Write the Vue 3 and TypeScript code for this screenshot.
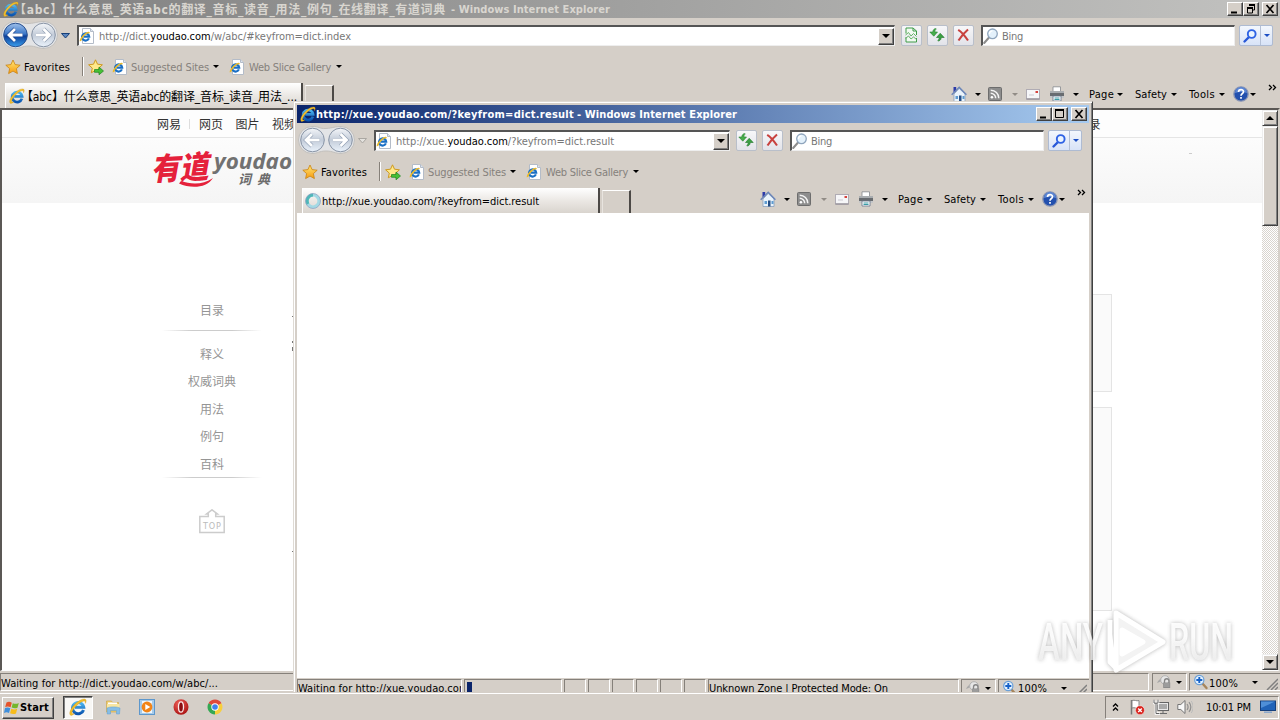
<script setup lang="ts">
interface BrowserWindow {
  id: string
  title: string
  titleWidth: number
  suffix: string
  suffixWidth: number
  host: [string, string, string]
  urlWidth: number
  tab: string
  tabWidth: number
  active: boolean
}

interface Command {
  icon?: string
  label?: string
  labelWidth?: number
  size?: number
  width: number
  gap: number
  arrow?: 'on' | 'off'
}

const windows: BrowserWindow[] = [
  {
    id: 'main',
    title: '【abc】什么意思_英语abc的翻译_音标_读音_用法_例句_在线翻译_有道词典',
    titleWidth: 432,
    suffix: '- Windows Internet Explorer',
    suffixWidth: 159,
    host: ['http://dict.', 'youdao.com', '/w/abc/#keyfrom=dict.index'],
    urlWidth: 252,
    tab: '【abc】什么意思_英语abc的翻译_音标_读音_用法_...',
    tabWidth: 276,
    active: false,
  },
  {
    id: 'popup',
    title: 'http://xue.youdao.com/?keyfrom=dict.result',
    titleWidth: 258,
    suffix: '- Windows Internet Explorer',
    suffixWidth: 160,
    host: ['http://xue.', 'youdao.com', '/?keyfrom=dict.result'],
    urlWidth: 218,
    tab: 'http://xue.youdao.com/?keyfrom=dict.result',
    tabWidth: 217,
    active: true,
  },
]

const commands: Command[] = [
  { icon: 'home', size: 16, width: 37, gap: 8, arrow: 'on' },
  { icon: 'rss', size: 14, width: 38, gap: 10, arrow: 'off' },
  { icon: 'mail', size: 14, width: 23, gap: 0 },
  { icon: 'printer', size: 16, width: 40, gap: 8, arrow: 'on' },
  { label: 'Page', labelWidth: 25, width: 46, gap: 3, arrow: 'on' },
  { label: 'Safety', labelWidth: 32, width: 54, gap: 4, arrow: 'on' },
  { label: 'Tools', labelWidth: 26, width: 44, gap: 4, arrow: 'on' },
  { icon: 'help', size: 16, width: 35, gap: 1, arrow: 'on' },
]

const topics = ['释义', '权威词典', '用法', '例句', '百科']
const topLinks = ['网页', '图片', '视频']
const launchers = ['explorer', 'player', 'opera', 'chrome']

// Spreads the letters of a label so that it fills exactly the given width.
const vFit = {
  mounted(el: HTMLElement, binding: { value: number }) {
    const count = Array.from(el.textContent ?? '').length
    const natural = el.getBoundingClientRect().width
    if (count > 0 && natural > 0) {
      el.style.letterSpacing = `${(binding.value - natural) / count}px`
    }
  },
}
</script>

<template>
  <div class="screen">
    <svg class="defs" width="0" height="0">
      <defs>
        <linearGradient id="gBlue" x1="0" y1="0" x2="0" y2="1">
          <stop offset="0" stop-color="#9fc0ea" /><stop offset=".45" stop-color="#3c78c8" />
          <stop offset=".55" stop-color="#0d3f99" /><stop offset="1" stop-color="#3aa0ee" />
        </linearGradient>
        <linearGradient id="gPale" x1="0" y1="0" x2="0" y2="1">
          <stop offset="0" stop-color="#f4f6f9" /><stop offset=".5" stop-color="#c3ccd9" />
          <stop offset="1" stop-color="#eaf2fb" />
        </linearGradient>
        <linearGradient id="gStar" x1="0" y1="0" x2="0" y2="1">
          <stop offset="0" stop-color="#ffe97a" /><stop offset="1" stop-color="#f79a0c" />
        </linearGradient>
        <linearGradient id="gE" x1="0" y1="0" x2="0" y2="1">
          <stop offset="0" stop-color="#4db8f2" /><stop offset="1" stop-color="#0b55b0" />
        </linearGradient>
        <linearGradient id="gMark" x1="0" y1="0" x2="0" y2="1">
          <stop offset=".4" stop-color="#fff" /><stop offset="1" stop-color="#e4e4e4" />
        </linearGradient>
        <radialGradient id="gRed" cx=".4" cy=".3" r=".8">
          <stop offset="0" stop-color="#f0625a" /><stop offset="1" stop-color="#a30a0a" />
        </radialGradient>
      </defs>
      <symbol id="ie" viewBox="0 0 16 16">
        <path d="M12.9 10.6A5 5 0 1 1 13.1 8.3H5.2" fill="none" stroke="url(#gE)" stroke-width="2.7" />
        <path d="M1.2 15.2C-.8 13 3.2 6.6 8 3.2 11.5.6 15.4 0 15.2 2.6c0 .8-.3 1.5-.7 2.2.2-1.7-.3-2.3-1.7-2C8.9 3.6 2.3 10.600 2.600 13.400c.1.8 1 .9 2.300.4-1.400 1.200-2.900 2.100-3.700 1.400z" fill="#f3c02c" stroke="#c58a12" stroke-width=".3" />
      </symbol>
      <symbol id="iepage" viewBox="0 0 16 16">
        <path d="M3.500.5h8l3 3v12h-11z" fill="#fff" stroke="#b4bcc8" />
        <path d="M11.500.5v3h3" fill="#dde6f0" stroke="#b4bcc8" />
        <path d="M9.900 10.400A3.600 3.600 0 1 1 10.200 8.700H4.500" fill="none" stroke="#1a6fc4" stroke-width="2.200" />
        <path d="M.8 13.500C0 11 5 4.500 9.500 3.800c1.300-.1 1.500.8 1 1.700C9 3.800 3 9.500 2.600 12.400z" fill="#e9b92c" />
      </symbol>
      <symbol id="star" viewBox="0 0 16 16">
        <path d="M8 1l2.100 4.600 5.100.6-3.800 3.400 1 5L8 12.100l-4.400 2.500 1-5L.8 6.200l5.100-.6z" fill="url(#gStar)" stroke="#c98312" stroke-width=".8" />
      </symbol>
      <symbol id="staradd" viewBox="0 0 16 16">
        <path d="M7.500 .8l2 4.400 4.900.6-3.700 3.300 1 4.700-4.200-2.400-4.200 2.400 1-4.700L.6 5.800l4.900-.6z" fill="#ffe98a" stroke="#cf9a20" />
        <path d="M6.500 10.500h4.500V8l4.500 4-4.500 3.800v-2.500H6.500z" fill="#46c035" stroke="#1c8420" stroke-width=".7" />
      </symbol>
      <symbol id="compat" viewBox="0 0 16 16">
        <path d="M3 6.500V1h7l3.500 3v4M3 10v5h10.500v-4" fill="#f2faf2" stroke="#3f9b48" />
        <path d="M10 1v3h3.500" fill="none" stroke="#3f9b48" />
        <path d="M2.500 8l3-2.500L8 9l2.500-2.500 3 3M2.500 11.500l3-2.500L8 12l2.500-2 3 2.500" fill="none" stroke="#67b56a" />
      </symbol>
      <symbol id="refresh" viewBox="0 0 16 16">
        <path d="M6.500 1.500C4.500 2 3.800 3.500 3.800 5H.8l4 4.200L8.500 5H5.900c0-1.300.2-2.300 1.400-3z" fill="#47ad4c" stroke="#26832f" stroke-width=".6" />
        <path d="M9.500 14c2-.5 2.700-2 2.700-3.500h3l-4-4.200L7.500 10.500h2.600c0 1.300-.2 2.300-1.400 3z" fill="#3ba043" stroke="#20762a" stroke-width=".6" />
      </symbol>
      <symbol id="stop" viewBox="0 0 16 16">
        <path d="M3.200 2.800C6 4.500 10 9 13 13.500M13 2.500C9.500 5.500 6 9.500 3.500 13.500" fill="none" stroke="#c8423f" stroke-width="2.100" />
      </symbol>
      <symbol id="lens" viewBox="0 0 16 16">
        <path d="M6 9.500L1.200 15" stroke="#8d8d8d" stroke-width="2" stroke-linecap="round" />
        <circle cx="9.500" cy="5.800" r="4.800" fill="#e4f1fb" stroke="#8fa5bd" stroke-width="1.300" />
        <path d="M6.500 6a3 3 0 0 1 3-3.200" fill="none" stroke="#fff" stroke-width="1.300" />
      </symbol>
      <symbol id="search" viewBox="0 0 16 16">
        <path d="M7 9L2.500 13.500" stroke="#2858d8" stroke-width="2.400" stroke-linecap="round" />
        <circle cx="9.700" cy="6" r="3.900" fill="#eaf4ff" stroke="#2e62e4" stroke-width="1.900" />
      </symbol>
      <symbol id="home" viewBox="0 0 16 16">
        <path d="M2.500 1h2.700v5H2.500z" fill="#2c3aa8" />
        <path d="M3 8l5.200-5.500L14 8v7.500H3z" fill="#e9f3fb" stroke="#7e97b8" stroke-width=".7" />
        <path d="M.7 8.800L8.200 1.300l7.200 7.500" fill="none" stroke="#6b86b9" stroke-width="1.500" />
        <path d="M8 9.500h2.500v6H8z" fill="#264f85" /><path d="M11.500 10h2v3h-2zM4.500 10H7v3H4.500z" fill="#5f9bd0" />
      </symbol>
      <symbol id="rss" viewBox="0 0 14 14">
        <rect x=".5" y=".5" width="13" height="13" rx="1" fill="#8d8d8d" stroke="#6d6d6d" />
        <circle cx="3.900" cy="10.200" r="1.300" fill="#fff" />
        <path d="M2.700 6.300a5 5 0 0 1 5 5M2.700 3.200a8 8 0 0 1 8.100 8.100" fill="none" stroke="#f4f4f4" stroke-width="1.500" />
      </symbol>
      <symbol id="mail" viewBox="0 0 14 14">
        <rect x=".5" y="2.500" width="13" height="9.500" fill="#f6f6f8" stroke="#b0acb4" />
        <path d="M.5 12h13" stroke="#858089" /><path d="M9.500 4h2.500v2H9.500z" fill="#d6423c" />
        <path d="M3 8h5" stroke="#cbc9d2" />
      </symbol>
      <symbol id="printer" viewBox="0 0 16 16">
        <path d="M4 5V.8h7.500V5" fill="#fff" stroke="#85898e" stroke-width=".8" />
        <path d="M1 5h14v6.500H1z" fill="#686c70" /><path d="M1 5h14v2H1z" fill="#a9adb0" />
        <path d="M1 10h14v2H1z" fill="#c5c7c9" />
        <path d="M4 10h8v5H4z" fill="#fff" stroke="#64758a" stroke-width=".8" />
        <path d="M5.500 12h5M5.500 13.500h5" stroke="#3c9ba6" />
      </symbol>
      <symbol id="help" viewBox="0 0 16 16">
        <circle cx="8" cy="8" r="7.200" fill="#2350ae" stroke="#8b96b4" stroke-width="1.300" />
        <path d="M2 7a6 6 0 0 1 12 0c-4-1.500-8-1.500-12 0z" fill="#5c86d3" />
        <path d="M5.500 6.100C5.500 2.900 10.500 2.900 10.500 5.800 10.500 7.600 8 7.500 8 9.800M8 11v1.800" fill="none" stroke="#fff" stroke-width="1.700" />
      </symbol>
      <symbol id="zoomglass" viewBox="0 0 16 16">
        <path d="M9 9l4.500 5" stroke="#a7855a" stroke-width="2.400" stroke-linecap="round" />
        <circle cx="6.300" cy="6" r="4.600" fill="#e4f2ff" stroke="#6ba0d8" stroke-width="1.200" />
        <path d="M6.300 3v6M3.300 6h6" stroke="#1762c8" stroke-width="1.900" />
      </symbol>
      <symbol id="lock" viewBox="0 0 16 16">
        <path d="M1 9c2-4 6-6.500 9-6.500L8.500 7C5.500 6.500 3 8 1 9z" fill="#a8a8a8" />
        <circle cx="9" cy="6" r="4.300" fill="#e6e6e6" stroke="#b2b2b2" />
        <path d="M8.500 9V7a2 2 0 0 1 4.500 0v2" fill="none" stroke="#858585" stroke-width="1.300" />
        <rect x="7.200" y="8.500" width="7" height="5.500" fill="#8b8b8b" />
        <path d="M8 10h5.500M8 12h5.500" stroke="#bbb" stroke-width=".7" />
      </symbol>
      <symbol id="explorer" viewBox="0 0 16 16">
        <path d="M1.500 2h5l1 1.500h6V13h-12z" fill="#efce70" stroke="#caa345" stroke-width=".6" />
        <path d="M3 3.500h9V8H3z" fill="#fff" /><path d="M2 5h12.500v5H2z" fill="#f8e6a2" />
        <path d="M2 9c3-1.500 10-1.500 13 0l-.5 6h-3v-3.500H5.500V15H2.200z" fill="#86bde6" stroke="#5c9cd0" stroke-width=".5" />
      </symbol>
      <symbol id="player" viewBox="0 0 16 16">
        <rect x=".5" y=".5" width="15" height="15" fill="#a6cbea" stroke="#5d97cc" />
        <path d="M3 2h10v12H3z" fill="#eef6fc" /><circle cx="8" cy="8" r="5.400" fill="#f28417" />
        <path d="M6.300 4.900l5 3.100-5 3.100z" fill="#fff" />
      </symbol>
      <symbol id="opera" viewBox="0 0 16 16">
        <ellipse cx="8" cy="8" rx="7.500" ry="7.800" fill="url(#gRed)" />
        <ellipse cx="8" cy="8" rx="2.500" ry="5.200" fill="#8b0d10" stroke="#fbeaea" stroke-width="1.300" />
      </symbol>
      <symbol id="chrome" viewBox="0 0 16 16">
        <path d="M8 8L1.500 4.300A7.500 7.500 0 0 1 14.500 4.300z" fill="#e04a3a" />
        <path d="M8 8L14.500 4.300A7.500 7.500 0 0 1 8 15.500z" fill="#f7cf3c" />
        <path d="M8 8V15.500A7.500 7.500 0 0 1 1.500 4.300z" fill="#35a853" />
        <circle cx="8" cy="8" r="3.700" fill="#fff" /><circle cx="8" cy="8" r="2.800" fill="#3f82ee" />
      </symbol>
      <symbol id="flagx" viewBox="0 0 16 16">
        <path d="M2.500 1v14.500" stroke="#777" stroke-width="1.500" />
        <path d="M3 1.500c3-1 4 1 7 0v7.500c-3 1-4-1-7 0z" fill="#fff" stroke="#888" />
        <circle cx="11" cy="11.200" r="4.500" fill="#d9241d" stroke="#fff" stroke-width=".5" />
        <path d="M9.200 9.400l3.600 3.600M12.800 9.400L9.200 13" stroke="#fff" stroke-width="1.400" />
      </symbol>
      <symbol id="net" viewBox="0 0 16 16">
        <rect x="4.500" y="3.500" width="11" height="8" fill="#e8e8e8" stroke="#656565" />
        <rect x="6" y="5" width="8" height="5" fill="#a9a9a9" />
        <path d="M6 14.500h8M10 12v2" stroke="#6a6a6a" />
        <path d="M1 1v3h4V1M3 4v10.500h4" fill="none" stroke="#fff" stroke-width="2.600" />
        <path d="M1 .8v3.300h4V.8M3 4v10.500h3.500" fill="none" stroke="#606060" />
      </symbol>
      <symbol id="speaker" viewBox="0 0 16 16">
        <path d="M.8 5.500h3L8 1.500v13L3.800 10.500h-3z" fill="#f8f8f8" stroke="#757575" />
        <path d="M10 5c1.300 1.800 1.300 4.200 0 6M12 3.200c2.300 3 2.300 6.600 0 9.600" fill="none" stroke="#8f8f8f" stroke-width="1.200" />
        <path d="M14.300 2c2.300 4 2.300 8 0 12" fill="none" stroke="#bbb" />
      </symbol>
      <symbol id="monitor" viewBox="0 0 16 16">
        <rect x=".5" y="2" width="15" height="9.500" fill="#2163b8" stroke="#16407c" />
        <path d="M1 2.500h14L1 9z" fill="#4f8fd8" /><path d="M4 13.200h8" stroke="#8aa7cc" stroke-width="1.500" />
      </symbol>
      <symbol id="winlogo" viewBox="0 0 16 16">
        <path d="M2.500 2.500c2-1 3.500-.8 5.300.2L6.600 7.300C4.800 6.300 3 6.300 1.200 7z" fill="#e5532a" />
        <path d="M8.800 3.200c2 .8 3.700.8 6-.3l-1.300 4.800c-2 .9-3.700.8-5.900-.1z" fill="#74b62c" />
        <path d="M1 8c2-.8 3.600-.7 5.300.3L5 13c-1.600-1-3.200-1-5 0z" fill="#3f8fdc" />
        <path d="M7.300 8.800c2 .9 3.800.9 5.900 0L12 13.500c-2 .9-3.800.8-5.900-.2z" fill="#f7bc1a" />
      </symbol>
    </svg>

    <div class="desktop">
      <section v-for="win in windows" :key="win.id" class="window" :class="win.id">
        <header class="titlebar">
          <svg class="i16"><use href="#ie" /></svg>
          <span v-fit="win.titleWidth" class="title">{{ win.title }}</span>
          <span v-fit="win.suffixWidth" class="title suffix">{{ win.suffix }}</span>
          <span class="spacer"></span>
          <span class="caps">
            <i class="cap"><svg viewBox="0 0 14 12"><path d="M3 8.500h6v2H3z" /></svg></i>
            <i class="cap">
              <svg v-if="win.active" viewBox="0 0 14 12"><path d="M2.500 2h8v7.500h-8z" fill="none" stroke="#000" /><path d="M2 1h9v2H2z" /></svg>
              <svg v-else viewBox="0 0 14 12"><path d="M5.500 2h5v5h-2M3.500 5h5v5h-5z" fill="none" stroke="#000" /><path d="M5 1h6v2H5zM3 4h6v2H3z" /></svg>
            </i>
            <i class="cap close"><svg viewBox="0 0 14 12"><path d="M3.500 2l7 8M10.500 2l-7 8" stroke="#000" stroke-width="1.700" /></svg></i>
          </span>
        </header>

        <div class="navrow">
          <svg class="travel" viewBox="0 0 72 30">
            <path d="M15 1.500C22 1 22 4 29 3.500S38 1.500 44 1.500a13 13 0 0 1 0 27C38 28.500 36 26 29 26s-8 2.500-14 2.500a13 13 0 0 1 0-27z" fill="#e3e4e6" stroke="#c2c0bd" />
            <circle cx="15.500" cy="15" r="11.800" :fill="win.active ? 'url(#gPale)' : 'url(#gBlue)'" :stroke="win.active ? '#8793a5' : '#274e8e'" />
            <circle cx="43.500" cy="15" r="11.800" fill="url(#gPale)" stroke="#8793a5" />
            <g fill="none" stroke-width="3">
              <path d="M22.500 15H10M15 9l-6 6 6 6" :stroke="win.active ? '#8f9db2' : '#1c458c'" stroke-width="4" />
              <path d="M22.500 15H10M15 9l-6 6 6 6" stroke="#fff" stroke-width="2.800" />
              <path d="M36 15H48.500M43.500 9l6 6-6 6" stroke="#8f9db2" stroke-width="4" />
              <path d="M36 15H48.500M43.500 9l6 6-6 6" stroke="#fff" stroke-width="2.800" />
            </g>
            <path d="M61.500 13.500h8l-4 4.500z" :fill="win.active ? '#e4e2de' : '#5b86c0'" :stroke="win.active ? '#aaa7a2' : '#173f78'" />
          </svg>
          <div class="address">
            <svg class="i16"><use href="#iepage" /></svg>
            <span v-fit="win.urlWidth" class="url">{{ win.host[0] }}<b>{{ win.host[1] }}</b>{{ win.host[2] }}</span>
            <span class="spacer"></span>
            <i class="drop"><i class="arrow big"></i></i>
          </div>
          <i v-if="!win.active" class="tool"><svg class="i16"><use href="#compat" /></svg></i>
          <i class="tool"><svg class="i16"><use href="#refresh" /></svg></i>
          <i class="tool"><svg class="i16"><use href="#stop" /></svg></i>
          <div class="searchbox"><svg class="i16"><use href="#lens" /></svg><span v-fit="21">Bing</span></div>
          <div class="go"><i><svg class="i16"><use href="#search" /></svg></i><i><i class="arrow blue"></i></i></div>
        </div>

        <div class="favrow">
          <svg class="i16"><use href="#star" /></svg>
          <span v-fit="46" class="favlabel">Favorites</span>
          <i class="rule"></i>
          <svg class="i16"><use href="#staradd" /></svg>
          <svg class="i16 page1"><use href="#iepage" /></svg>
          <span v-fit="78" class="dim">Suggested Sites</span><i class="arrow a1"></i>
          <svg class="i16 page2"><use href="#iepage" /></svg>
          <span v-fit="82" class="dim">Web Slice Gallery</span><i class="arrow a2"></i>
        </div>

        <div class="tabrow">
          <div class="tab">
            <svg v-if="!win.active" class="i16"><use href="#ie" /></svg>
            <svg v-else class="i16" viewBox="0 0 16 16">
              <circle cx="8" cy="8" r="6" fill="none" stroke="#a3d9e4" stroke-width="3.200" />
              <path d="M8 2a6 6 0 0 0-5 9" fill="none" stroke="#4fb7b8" stroke-width="3" />
              <circle cx="8" cy="8" r="7.500" fill="none" stroke="#8c9dc0" stroke-width=".7" />
            </svg>
            <span v-fit="win.tabWidth">{{ win.tab }}</span>
          </div>
          <div class="newtab"></div>
          <span class="spacer"></span>
          <div class="commands">
            <div
              v-for="cmd in commands"
              :key="cmd.icon ?? cmd.label"
              class="command"
              :style="{ width: cmd.width + 'px', gap: cmd.gap + 'px' }"
            >
              <svg v-if="cmd.icon" :width="cmd.size" :height="cmd.size"><use :href="'#' + cmd.icon" /></svg>
              <span v-if="cmd.label" v-fit="cmd.labelWidth">{{ cmd.label }}</span>
              <i v-if="cmd.arrow" class="arrow" :class="{ faded: cmd.arrow === 'off' }"></i>
            </div>
            <svg class="more" viewBox="0 0 10 8"><path d="M1 1l2.500 2.500L1 6M5 1l2.500 2.500L5 6" fill="none" stroke="#000" stroke-width="1.300" /></svg>
          </div>
        </div>

        <main v-if="!win.active" class="view framed">
          <div class="webpage">
            <nav class="toplinks">
              <a class="first">网易</a>
              <a v-for="link in topLinks" :key="link">{{ link }}</a>
              <a class="login">登录</a>
            </nav>
            <div class="brand">
              <svg width="150" height="48" viewBox="0 0 150 48">
                <text x="0" y="32" class="cn" textLength="58" lengthAdjust="spacingAndGlyphs" transform="rotate(-3 30 30)">有道</text>
                <path d="M30 34C40 37.500 52 38 62 31 56 41 40 42 28 36.500z" fill="#e5213b" />
                <text x="63" y="22" class="en" textLength="78" lengthAdjust="spacingAndGlyphs">youdao</text>
                <text x="87" y="37" class="sub" textLength="32">词 典</text>
              </svg>
              <i class="speck"></i>
            </div>
            <div class="body">
              <aside class="outline">
                <h4>目录</h4>
                <i class="fade"></i>
                <ul><li v-for="topic in topics" :key="topic">{{ topic }}</li></ul>
                <i class="fade"></i>
                <svg class="totop" width="26" height="25" viewBox="0 0 26 25">
                  <path d="M.8 7.500h8.500V5H7.500L13 .8 18.500 5h-1.800v2.500h8.500v16H.8z" fill="none" stroke="#ccc" stroke-width="1.500" />
                  <text x="4" y="19.500" textLength="18">TOP</text>
                </svg>
              </aside>
              <div class="ticks"><i class="t1"></i><i class="t2"></i><i class="t3"></i><i class="t4"></i></div>
              <div class="cards"><div class="card short"></div><div class="card tall"></div></div>
            </div>
          </div>
          <div class="scroll">
            <i class="sb"><i class="arrow big up"></i></i>
            <i class="thumb"></i>
            <span class="spacer"></span>
            <i class="sb"><i class="arrow big"></i></i>
          </div>
        </main>
        <main v-else class="view"></main>

        <footer class="status">
          <div v-if="!win.active" class="cell grow"><span v-fit="217">Waiting for http://dict.youdao.com/w/abc/...</span></div>
          <template v-else>
            <div class="cell wait"><span v-fit="174">Waiting for http://xue.youdao.com/</span></div>
            <div class="cell progress"><i></i></div>
            <div v-for="n in 6" :key="n" class="cell slot"></div>
            <div class="cell grow"><span v-fit="179">Unknown Zone | Protected Mode: On</span></div>
          </template>
          <div class="cell guard"><svg class="i16"><use href="#lock" /></svg><i class="arrow"></i></div>
          <div class="cell zoom">
            <svg class="i16"><use href="#zoomglass" /></svg><span v-fit="29">100%</span><i class="arrow"></i>
            <svg class="grip" viewBox="0 0 12 12"><path d="M1 12L12 1M5 12l7-7M9 12l3-3" stroke="#808080" stroke-width="1.500" /></svg>
          </div>
        </footer>
      </section>
    </div>

    <div class="taskbar">
      <div class="start"><svg class="i16"><use href="#winlogo" /></svg><b v-fit="29">Start</b></div>
      <div class="running"><svg width="18" height="18"><use href="#ie" /></svg></div>
      <div class="launch"><svg v-for="name in launchers" :key="name" class="i16"><use :href="'#' + name" /></svg></div>
      <span class="spacer"></span>
      <div class="tray">
        <svg class="chev" viewBox="0 0 8 10"><path d="M1 4.500L3.500 2 6 4.500M1 8.500L3.500 6 6 8.500" fill="none" stroke="#000" stroke-width="1.300" /></svg>
        <svg class="i16"><use href="#flagx" /></svg>
        <svg class="i16"><use href="#net" /></svg>
        <svg class="i16"><use href="#speaker" /></svg>
        <span v-fit="45" class="clock">10:01 PM</span>
        <svg class="i16"><use href="#monitor" /></svg>
      </div>
    </div>

    <svg class="watermark" width="204" height="72" viewBox="0 0 204 72">
      <g class="word">
        <text x="4" y="54" textLength="65" lengthAdjust="spacingAndGlyphs">ANY</text>
        <text x="135" y="54" textLength="64" lengthAdjust="spacingAndGlyphs">RUN</text>
      </g>
      <g stroke-linejoin="round" class="play">
        <path d="M82 7L129 36 82 64z" fill="#f1f1f1" />
        <path d="M76 14v42l7 7M88 24l21 12-21 12z" fill="#fff" />
      </g>
    </svg>
  </div>
</template>

<style>
html, body { margin: 0; overflow: hidden; }
</style>

<style scoped>
* { box-sizing: border-box; }
.screen { position: relative; width: 1280px; height: 720px; overflow: hidden; display: flex; flex-direction: column; background: #d5cfc8; font: 11px/14px "DejaVu Sans Condensed", "DejaVu Sans", "Noto Sans CJK SC", sans-serif; color: #000; white-space: nowrap; }
.defs { position: absolute; }
svg { display: block; flex: none; }
i { display: block; font-style: normal; flex: none; }
.i16 { width: 16px; height: 16px; }
.spacer { flex: 1; }
.desktop { position: relative; height: 692px; overflow: hidden; flex: none; }
.window { display: flex; flex-direction: column; background: #d5cfc8; }
.window span:not(.caps) { margin-top: 2px; }
.main { height: 692px; width: 1280px; }
.popup { position: absolute; left: 293px; top: 101px; width: 800px; height: 600px; padding: 2px; border: solid; border-width: 1px; border-color: #dedad4 #404040 #404040 #dedad4; box-shadow: inset 1px 1px #fff, inset -1px -1px #808080; }
.popup > * { margin: 0 0 0 1px; width: 792px; }
.popup .titlebar { margin-top: 1px; }

.titlebar { height: 18px; flex: none; display: flex; align-items: center; padding: 0 2px 0 3px; background: linear-gradient(90deg, #808080, #c2c2c0); color: #d9d6d0; font-weight: bold; }
.popup .titlebar { background: linear-gradient(90deg, #0a246a, #a6caf0); color: #fff; }
.main .title:not(.suffix) { font-size: 12px; margin-left: -5px; }
.suffix { margin-left: 5px; }
.popup .suffix { margin-left: 3px; }
.caps { display: flex; }
.cap { width: 16px; height: 14px; background: #d5cfc8; border: 1px solid; border-color: #fff #404040 #404040 #fff; box-shadow: inset -1px -1px #808080; }
.cap svg { width: 14px; height: 12px; }
.cap.close { margin-left: 3px; }

.navrow { height: 34px; flex: none; display: flex; align-items: center; padding: 0 7px 0 0; }
.travel { width: 72px; height: 30px; margin: 0 5px 0 0; }
.address { flex: 1; height: 21px; display: flex; align-items: center; background: #fff; border: solid; border-width: 2px 1px 1px 2px; border-color: #555 #eee #eee #555; margin-right: 6px; min-width: 0; margin-top: 1px; }
.url { margin-left: 4px; color: #777; }
.url b { font-weight: normal; color: #000; }
.drop { width: 16px; height: 17px; display: flex; align-items: center; justify-content: center; background: #d5cfc8; border: 1px solid; border-color: #fff #404040 #404040 #fff; box-shadow: inset -1px -1px #808080; }
.arrow { width: 0; height: 0; border: solid transparent; border-width: 3px 3px 0; border-top-color: #000; }
.arrow.big { border-width: 4px 4px 0; border-top-color: #000; }
.arrow.up { border-width: 0 4px 4px; border-bottom-color: #000; }
.arrow.blue { border-top-color: #1c4fc4; }
.arrow.faded { border-top-color: #918c86; }
.tool { width: 21px; height: 21px; margin: 1px 5px 0 0; padding: 1px; border: 1px solid #b9bfca; border-radius: 2px; background: linear-gradient(#f7f7f9, #e2e3e9); }
.searchbox { width: 254px; height: 21px; margin: 1px 4px 0 2px; display: flex; align-items: center; background: #fff; border: solid; border-width: 2px 1px 1px 2px; border-color: #555 #eee #eee #555; color: #777; gap: 3px; }
.searchbox svg { margin-left: 0; }
.go { display: flex; width: 34px; height: 21px; margin-top: 1px; border: 1px solid #aebbd2; border-radius: 2px; background: linear-gradient(#f3f7fd, #d8e3f7); }
.go > i { display: flex; align-items: center; justify-content: center; width: 20px; }
.go > i + i { width: 12px; border-left: 1px solid #b4c0d6; }

.favrow { height: 28px; flex: none; display: flex; align-items: center; padding: 1px 0 0 5px; }
.favlabel { margin-left: 3px; }
.rule { width: 2px; height: 19px; margin: 0 4px 0 12px; border-left: 1px solid #868079; border-right: 1px solid #fff; }
.page1 { margin: 0 3px 0 8px; }
.page2 { margin: 0 4px 0 10px; }
.dim { color: #85817c; }
.a1 { margin-left: 4px; }
.a2 { margin-left: 5px; }

.tabrow { height: 28px; flex: none; display: flex; padding-left: 5px; }
.tab { width: 298px; height: 25px; margin-top: 3px; padding-left: 3px; display: flex; align-items: center; background: linear-gradient(#fff, #ebe8e4 50%, #d9d4ce); border-right: 2px solid #4c4946; border-left: 1px solid #fff; overflow: hidden; }
.main .tab span { font-size: 12px; margin-left: -4px; }
.popup .tab span { margin-left: 1px; }
.popup .tab svg { margin-left: -1px; }
.newtab { width: 29px; height: 23px; margin: 5px 0 0 2px; border-top: 1px solid #fff; border-left: 1px solid #e8e4df; border-right: 2px solid #4c4946; }
.commands { display: flex; align-items: center; width: 329px; height: 28px; }
.command { display: flex; align-items: center; flex: none; }
.more { width: 10px; height: 8px; margin-top: -13px; }

.view { flex: 1; background: #fff; min-height: 0; }
.popup .view { flex: none; height: 465px; margin-top: 1px; }
.popup .tabrow { margin-bottom: -1px; }
.framed { display: flex; border: solid; border-width: 2px 2px 0 2px; border-color: #5b5855 #d5cfc8 #fff #5b5855; border-bottom-width: 1px; }
.webpage { flex: 1; min-width: 0; overflow: hidden; font-family: "Noto Sans CJK SC", sans-serif; }
.toplinks { display: flex; height: 28px; align-items: center; padding-left: 155px; font-size: 12px; color: #333; background: #fdfdfd; border-bottom: 1px solid #e5e5e5; }
.toplinks a { width: 36.500px; flex: none; }
.toplinks .first { width: 42px; background: linear-gradient(#ddd, #ddd) 32px 50% / 1px 10px no-repeat; }
.toplinks .login { margin-left: 768px; }
.brand { height: 65px; position: relative; padding: 9px 0 0 149px; background: linear-gradient(#fcfcfc, #f5f5f5); }
.brand .cn { font: italic 900 31px "Noto Sans CJK SC", sans-serif; fill: #e5213b; }
.brand .en { font: italic bold 22px "Open Sans", sans-serif; fill: #717171; }
.brand .sub { font: italic bold 13px "Noto Sans CJK SC", sans-serif; fill: #6c6c6c; }
.speck { position: absolute; left: 1187px; top: 15px; width: 3px; height: 1px; background: #ccc; }
.body { display: flex; height: 470px; }
.outline { width: 100px; margin-left: 160px; padding-top: 98px; font-size: 12px; color: #959595; text-align: center; }
.outline h4 { margin: 0 0 11px; font-size: 12px; line-height: 18px; font-weight: normal; }
.fade { height: 1px; background: linear-gradient(90deg, transparent, #ccc 30%, #ccc 70%, transparent); }
.outline ul { list-style: none; margin: 0; padding: 9px 0 0; height: 146px; }
.outline li { line-height: 27.400px; }
.totop { margin: 31px 0 0 37px; }
.totop text { font: 9px "DejaVu Sans Condensed", sans-serif; fill: #bbb; }
.ticks { width: 3px; margin-left: 30px; display: flex; flex-direction: column; }
.ticks i { width: 1px; height: 1px; background: #777; }
.ticks .t1 { margin-top: 113px; }
.ticks .t2 { margin-top: 24px; height: 2px; }
.ticks .t3 { margin-top: 4px; height: 4px; }
.ticks .t4 { margin-top: 200px; }
.cards { width: 817px; padding-top: 91px; }
.card { border: 1px solid #e4e4e4; background: #fafafa; }
.short { height: 98px; }
.tall { height: 204px; margin-top: 15px; }

.scroll { width: 16px; display: flex; flex-direction: column; background: repeating-conic-gradient(#fff 0 25%, #d9d4ce 0 50%) 0 0 / 2px 2px; }
.sb, .thumb { width: 16px; height: 16px; display: flex; align-items: center; justify-content: center; background: #d5cfc8; border: 1px solid; border-color: #eee #404040 #404040 #eee; box-shadow: inset 1px 1px #fff, inset -1px -1px #808080; }
.thumb { height: 100px; }

.status { height: 21px; flex: none; display: flex; padding-top: 1px; }
.cell { height: 18px; margin: 1px 1px 0; padding: 0 2px 0 1px; border: 1px solid; border-color: #85807a #fff #fff #85807a; display: flex; align-items: center; overflow: hidden; flex: none; }
.cell.grow { flex: 1; padding-left: 0; }
.main .grow { margin-left: 0; margin-right: 2px; }
.main .grow, .main .cell > span { padding-top: 1px; }
.popup .status { padding-top: 0; }
.popup .wait { width: 165px; margin-left: 0; padding-left: 0; }
.progress { width: 98px; }
.progress i { width: 5px; height: 12px; background: #0a246a; margin-left: 1px; }
.slot { width: 22px; }
.guard { width: 35px; padding-left: 3px; gap: 4px; }
.zoom { width: 91px; padding-left: 3px; border-right: 0; margin-right: 0; }
.zoom .arrow { margin-left: 14px; }
.zoom .grip { width: 12px; height: 12px; margin: 4px -1px 0 8px; }

.taskbar { height: 28px; flex: none; display: flex; align-items: center; padding: 1px 1px 0 2px; border-top: 1px solid #d5cfc8; box-shadow: inset 0 1px #fff; }
.start { width: 52px; height: 22px; margin-top: 1px; padding-left: 1px; display: flex; align-items: center; border: 1px solid; border-color: #fff #404040 #404040 #fff; box-shadow: inset -1px -1px #808080; }
.running { width: 30px; height: 23px; margin-left: 9px; display: flex; align-items: center; justify-content: center; background: #f8f7f5; border: 1px solid; border-color: #404040 #fff #fff #404040; box-shadow: inset 1px 1px #808080; }
.launch { display: flex; gap: 18px; margin-left: 12px; }
.tray { width: 174px; height: 23px; display: flex; align-items: center; border: 1px solid; border-color: #85807a #fff #fff #85807a; padding-left: 6px; gap: 8px; }
.chev { width: 8px; height: 10px; margin-right: 1px; }
.clock { margin: 1px 1px 0 5px; }

.watermark { position: absolute; left: 1034px; top: 606px; filter: drop-shadow(0 0 2px rgba(110, 110, 110, .6)); opacity: .85; }
.word text { font: 500 51px "Roboto", sans-serif; fill: url(#gMark); opacity: .9; }
.play path { stroke: #fff; stroke-width: 5; }
</style>
